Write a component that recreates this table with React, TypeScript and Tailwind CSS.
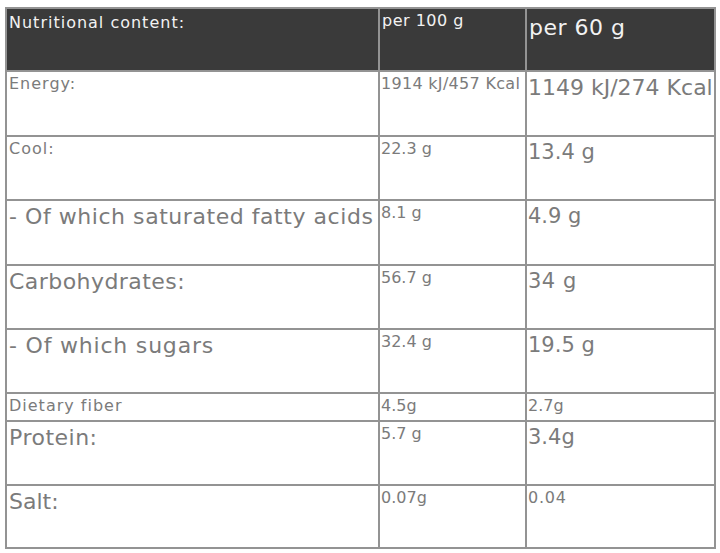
const rows = [
  { label: "Energy:", l: "text-[16px] tracking-[1px]", a: "1914 kJ/457 Kcal", as: "text-[16px] tracking-[0.3px]", b: "1149 kJ/274 Kcal", bs: "text-[22px]", h: "h-[65px]" },
  { label: "Cool:", l: "text-[16px] tracking-[1px]", a: "22.3 g", as: "text-[16px]", b: "13.4 g", bs: "text-[21px]", h: "h-[64px]" },
  { label: "- Of which saturated fatty acids", l: "text-[22px] tracking-[0.55px]", a: "8.1 g", as: "text-[16px]", b: "4.9 g", bs: "text-[21px]", h: "h-[65px]" },
  { label: "Carbohydrates:", l: "text-[22px] tracking-[0.45px]", a: "56.7 g", as: "text-[16px]", b: "34 g", bs: "text-[21px] tracking-[0.5px]", h: "h-[64px]" },
  { label: "- Of which sugars", l: "text-[22px] tracking-[0.8px]", a: "32.4 g", as: "text-[16px]", b: "19.5 g", bs: "text-[21px]", h: "h-[64px]" },
  { label: "Dietary fiber", l: "text-[16px] tracking-[1px]", a: "4.5g", as: "text-[16px]", b: "2.7g", bs: "text-[16px]", h: "h-[28px]" },
  { label: "Protein:", l: "text-[22px] tracking-[0.5px]", a: "5.7 g", as: "text-[16px]", b: "3.4g", bs: "text-[21px]", h: "h-[64px]" },
  { label: "Salt:", l: "text-[22px]", a: "0.07g", as: "text-[16px]", b: "0.04", bs: "text-[16px] tracking-[0.8px]", h: "h-[63px]" },
];

export default function App() {
  return (
    <div className="w-[720px] h-[553px] bg-white pt-[7px] pl-[5px] font-['DejaVu_Sans',sans-serif]">
      <table className="table-fixed border-collapse w-[709px]">
        <colgroup>
          <col className="w-[373px]" />
          <col className="w-[147px]" />
          <col className="w-[189px]" />
        </colgroup>
        <thead>
          <tr className="h-[63px] bg-[#3a3a3a] text-[#f2f2f2]">
            <th className="border-2 border-[#939393] align-top text-left font-normal pl-[2px] pt-[4px] text-[16px] tracking-[1px] leading-tight">
              Nutritional content:
            </th>
            <th className="border-2 border-[#939393] align-top text-left font-normal pl-[2px] pt-[2px] text-[16px] tracking-[0.5px] leading-tight">
              per 100 g
            </th>
            <th className="border-2 border-[#939393] align-top text-left font-normal pl-[2px] pt-[5px] text-[22px] tracking-[0.5px] leading-tight">
              per 60 g
            </th>
          </tr>
        </thead>
        <tbody className="text-[#7b7b7b]">
          {rows.map((r) => (
            <tr key={r.label} className={r.h}>
              <td className={`border-2 border-[#939393] align-top pl-[2px] pt-[2px] leading-tight whitespace-nowrap ${r.l}`}>{r.label}</td>
              <td className={`border-2 border-[#939393] align-top pl-[1px] pt-[2px] leading-tight whitespace-nowrap ${r.as}`}>{r.a}</td>
              <td className={`border-2 border-[#939393] align-top pl-[1px] pt-[2px] leading-tight whitespace-nowrap ${r.bs}`}>{r.b}</td>
            </tr>
          ))}
        </tbody>
      </table>
    </div>
  );
}
